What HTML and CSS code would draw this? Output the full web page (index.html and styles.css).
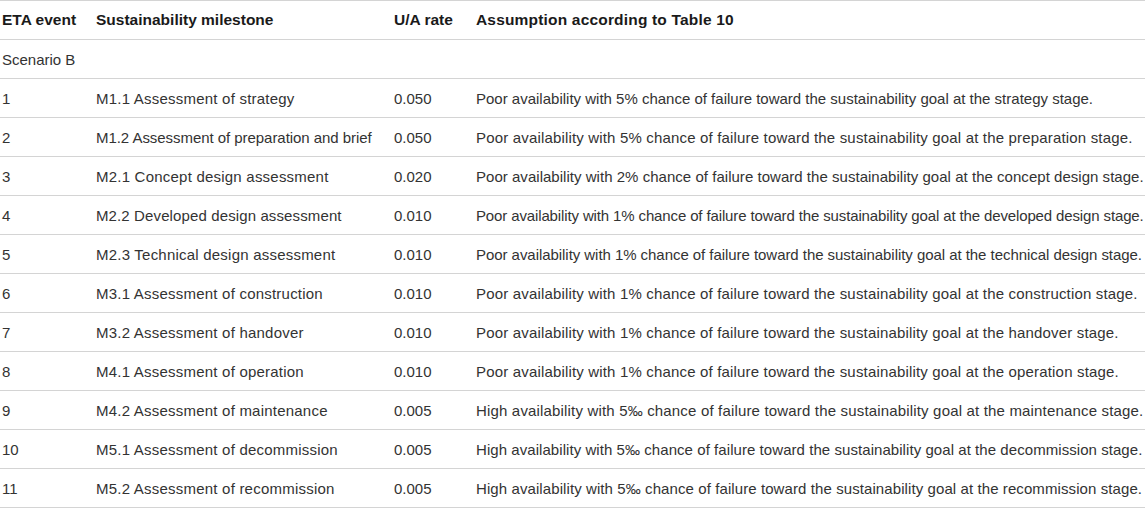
FILE: index.html
```html
<!DOCTYPE html>
<html>
<head>
<meta charset="utf-8">
<link rel="stylesheet" href="styles.css">
</head>
<body>
<table class="data">
  <colgroup>
    <col class="c1"><col class="c2"><col class="c3"><col class="c4">
  </colgroup>
  <thead>
    <tr><th>ETA event</th><th>Sustainability milestone</th><th>U/A rate</th><th class="wide">Assumption according to Table 10</th></tr>
  </thead>
  <tbody>
    <tr><td colspan="4">Scenario B</td></tr>
    <tr><td>1</td><td class="ms">M1.1 Assessment of strategy</td><td>0.050</td><td class="as sp-0">Poor availability with 5% chance of failure toward the sustainability goal at the strategy stage.</td></tr>
    <tr><td>2</td><td class="ms sp-m05">M1.2 Assessment of preparation and brief</td><td>0.050</td><td class="as">Poor availability with 5% chance of failure toward the sustainability goal at the preparation stage.</td></tr>
    <tr><td>3</td><td class="ms">M2.1 Concept design assessment</td><td>0.020</td><td class="as sp-p03">Poor availability with 2% chance of failure toward the sustainability goal at the concept design stage.</td></tr>
    <tr><td>4</td><td class="ms sp-p12">M2.2 Developed design assessment</td><td>0.010</td><td class="as sp-m13">Poor availability with 1% chance of failure toward the sustainability goal at the developed design stage.</td></tr>
    <tr><td>5</td><td class="ms">M2.3 Technical design assessment</td><td>0.010</td><td class="as sp-m05">Poor availability with 1% chance of failure toward the sustainability goal at the technical design stage.</td></tr>
    <tr><td>6</td><td class="ms">M3.1 Assessment of construction</td><td>0.010</td><td class="as">Poor availability with 1% chance of failure toward the sustainability goal at the construction stage.</td></tr>
    <tr><td>7</td><td class="ms">M3.2 Assessment of handover</td><td>0.010</td><td class="as">Poor availability with 1% chance of failure toward the sustainability goal at the handover stage.</td></tr>
    <tr><td>8</td><td class="ms">M4.1 Assessment of operation</td><td>0.010</td><td class="as">Poor availability with 1% chance of failure toward the sustainability goal at the operation stage.</td></tr>
    <tr><td>9</td><td class="ms">M4.2 Assessment of maintenance</td><td>0.005</td><td class="as">High availability with 5‰ chance of failure toward the sustainability goal at the maintenance stage.</td></tr>
    <tr><td>10</td><td class="ms">M5.1 Assessment of decommission</td><td>0.005</td><td class="as sp-p06">High availability with 5‰ chance of failure toward the sustainability goal at the decommission stage.</td></tr>
    <tr><td>11</td><td class="ms">M5.2 Assessment of recommission</td><td>0.005</td><td class="as sp-p09">High availability with 5‰ chance of failure toward the sustainability goal at the recommission stage.</td></tr>
  </tbody>
</table>
</body>
</html>
```
FILE: styles.css
```css
html, body {
  margin: 0;
  padding: 0;
  background: #fff;
}
.data {
  width: 1145px;
  border-collapse: collapse;
  table-layout: fixed;
  font-family: "Liberation Sans", Arial, sans-serif;
  font-size: 15px;
  color: #333;
  border-top: 1px solid #d4d4d4;
}
.c1 { width: 94px; }
.c2 { width: 298px; }
.c3 { width: 82px; }
.c4 { width: 671px; }
.data th, .data td {
  height: 38px;
  padding: 0 2px;
  text-align: left;
  vertical-align: middle;
  white-space: nowrap;
  border-bottom: 1px solid #d4d4d4;
}
.data th {
  font-size: 15.5px;
  font-weight: bold;
  color: #1a1a1a;
}
.data th.wide { letter-spacing: 0.18px; }
.data td.ms { letter-spacing: 0.22px; }
.data td.as { letter-spacing: 0.17px; }
.data td.sp-0 { letter-spacing: 0; }
.data td.sp-m05 { letter-spacing: -0.05px; }
.data td.sp-m13 { letter-spacing: -0.13px; }
.data td.sp-p03 { letter-spacing: 0.03px; }
.data td.sp-p06 { letter-spacing: 0.06px; }
.data td.sp-p09 { letter-spacing: 0.09px; }
.data td.sp-p12 { letter-spacing: 0.12px; }
```
